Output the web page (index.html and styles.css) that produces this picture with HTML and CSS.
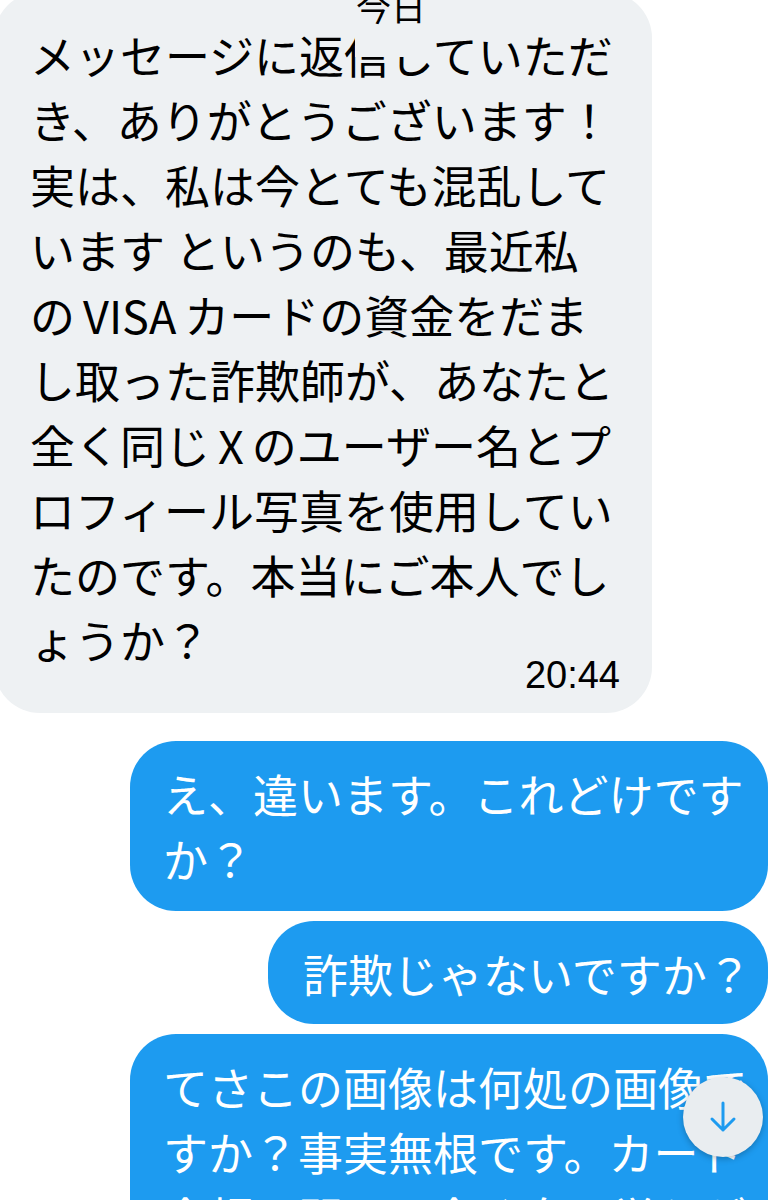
FILE: index.html
```html
<!DOCTYPE html>
<html lang="ja">
<head>
<meta charset="utf-8">
<title>メッセージ</title>
<link rel="stylesheet" href="styles.css">
</head>
<body>
<div class="chat">
  <div class="date-label">今日</div>
  <div class="msg msg-in">
    <div class="msg-text">メッセージに返信していただ<br>き、ありがとうございます！<br>実は、私は今とても混乱して<br>います というのも、最近私<br>の<span class="latin">VISA</span>カードの資金をだま<br>し取った詐欺師が、あなたと<br>全く同じ<span class="latin">X</span>のユーザー名とプ<br>ロフィール写真を使用してい<br>たのです。本当にご本人でし<br>ょうか？</div>
    <div class="msg-time">20:44</div>
  </div>
  <div class="msg msg-out msg-wide first-out">
    <div class="msg-text">え、違います。これどけです<br>か？</div>
  </div>
  <div class="msg msg-out msg-short">
    <div class="msg-text">詐欺じゃないですか？</div>
  </div>
  <div class="msg msg-out msg-wide">
    <div class="msg-text">てさこの画像は何処の画像で<br>すか？事実無根です。カード<br>金額に関して全く身に覚えが</div>
  </div>
  <button class="scroll-down" aria-label="下へスクロール">
    <svg width="30" height="34" viewBox="0 0 30 34" aria-hidden="true">
      <path d="M15 3 V30 M4 19 L15 30 L26 19" fill="none" stroke="#1d9bf0" stroke-width="3" stroke-linecap="round" stroke-linejoin="round"/>
    </svg>
  </button>
</div>
</body>
</html>
```

FILE: styles.css
```css
* {
  box-sizing: border-box;
}

html, body {
  margin: 0;
  padding: 0;
  background: #ffffff;
  width: 768px;
  height: 1200px;
  overflow: hidden;
}

body {
  font-family: "Noto Sans CJK JP", "Noto Sans", sans-serif;
  color: #000000;
}

.chat {
  position: relative;
  display: flex;
  flex-direction: column;
  gap: 10px;
  height: 1200px;
}

.date-label {
  position: absolute;
  top: -17px;
  left: 355px;
  width: 72px;
  height: 74px;
  background: #eef1f3;
  font-size: 35px;
  line-height: 45px;
  text-align: center;
  color: #000000;
  z-index: 2;
}

.msg {
  border-radius: 46px;
}

.msg-text {
  font-size: 45px;
  line-height: 65px;
  white-space: nowrap;
}

.latin {
  margin: 0 8px;
}

.msg-in {
  align-self: flex-start;
  margin-top: -8px;
  margin-left: -6px;
  width: 658px;
  padding: 30px 32px 18px 36px;
  background: #eef1f3;
}

.msg-time {
  margin-top: -17px;
  font-family: "Liberation Sans", "Noto Sans", sans-serif;
  font-size: 38px;
  line-height: 40px;
  text-align: right;
}

.msg-out {
  align-self: flex-end;
  background: #1d9bf0;
  color: #ffffff;
  padding: 20px 15px 20px 33px;
}

.first-out {
  margin-top: 18px;
}

.msg-wide {
  width: 638px;
}

.msg-short {
  width: 500px;
  padding-left: 35px;
  padding-bottom: 18px;
}

.scroll-down {
  position: absolute;
  left: 683px;
  top: 1077px;
  width: 80px;
  height: 80px;
  border: none;
  border-radius: 50%;
  background: #e9edf0;
  box-shadow: 0 2px 6px rgba(0, 0, 0, 0.25);
  display: flex;
  align-items: center;
  justify-content: center;
  padding: 0;
}
```
